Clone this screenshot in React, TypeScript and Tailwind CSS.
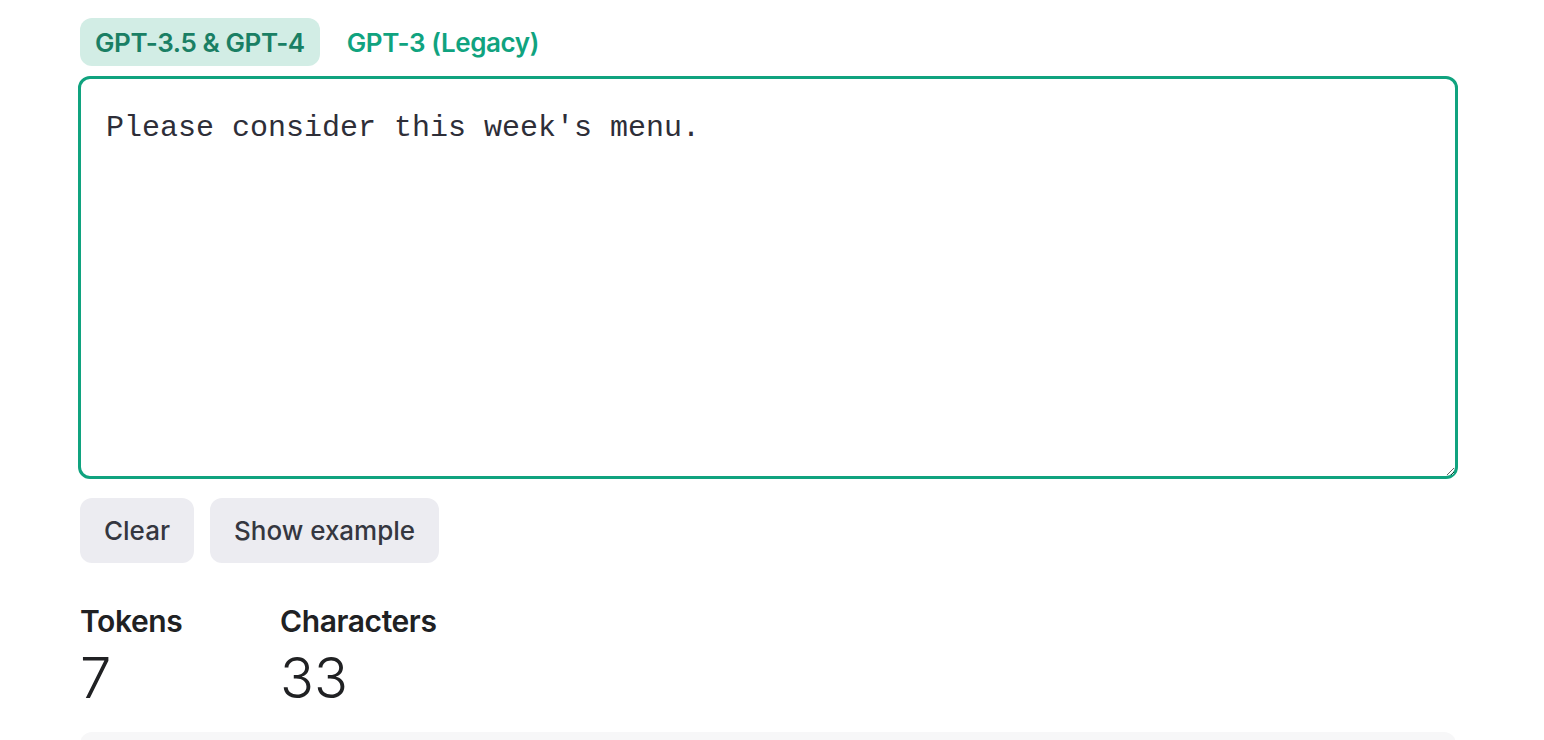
import React, { useEffect, useRef, useState } from 'react';

const App = () => {
  const [tab, setTab] = useState<'chat' | 'legacy'>('chat');
  const [text, setText] = useState("Please consider this week's menu.");
  const areaRef = useRef<HTMLTextAreaElement>(null);

  useEffect(() => {
    const el = areaRef.current;
    if (el) {
      el.focus();
      el.setSelectionRange(el.value.length, el.value.length);
    }
  }, []);

  // rough token count, good enough for the demo
  const tokens = text.trim() ? text.match(/'s|\w+|[^\w\s]/g)?.length ?? 0 : 0;

  return (
    <div className="min-h-screen bg-white font-['Inter',sans-serif] text-[#202123]">
      <div className="ml-20 mr-[88px] pt-[18px]">
        <div className="flex items-center gap-[12px] mb-[10px]">
          <button
            onClick={() => setTab('chat')}
            className={`h-12 px-[15px] rounded-[12px] text-[26px] font-semibold tracking-[-0.4px] ${
              tab === 'chat' ? 'bg-[#d2ede5] text-[#1a7f64]' : 'text-[#10a37f]'
            }`}
          >
            GPT-3.5 &amp; GPT-4
          </button>
          <button
            onClick={() => setTab('legacy')}
            className={`h-12 px-[15px] rounded-[12px] text-[26px] font-semibold tracking-[-0.4px] ${
              tab === 'legacy' ? 'bg-[#d2ede5] text-[#1a7f64]' : 'text-[#10a37f]'
            }`}
          >
            GPT-3 (Legacy)
          </button>
        </div>

        <textarea
          ref={areaRef}
          value={text}
          onChange={(e) => setText(e.target.value)}
          className="-mx-[2px] block w-[calc(100%+4px)] h-[403px] border-[3px] border-[#10a37f] rounded-[12px] px-[25px] pt-[29px] pb-[22px] font-['Liberation_Mono',monospace] text-[30px] leading-[40px] text-[#2e2e38] outline-none resize-y caret-[#202123]"
        />

        <div className="flex gap-4 mt-[19px]">
          <button
            onClick={() => setText('')}
            className="h-[65px] px-6 rounded-[12px] bg-[#ececf1] text-[26px] font-medium text-[#353740]"
          >
            Clear
          </button>
          <button
            onClick={() => setText("Please consider this week's menu.")}
            className="h-[65px] px-6 rounded-[12px] bg-[#ececf1] text-[26px] font-medium text-[#353740]"
          >
            Show example
          </button>
        </div>

        <div className="flex mt-[40px]">
          <div className="w-[200px]">
            <div className="text-[30px] font-semibold leading-[36px] tracking-[-0.4px]">Tokens</div>
            <div className="pt-[6px] text-[56px] font-light leading-[66px]">{tokens}</div>
          </div>
          <div>
            <div className="text-[30px] font-semibold leading-[36px] tracking-[-0.4px]">Characters</div>
            <div className="pt-[6px] text-[56px] font-light leading-[66px]">{text.length}</div>
          </div>
        </div>

        <div className="mt-[21px] h-40 rounded-[12px] bg-[#f7f7f8]" />
      </div>
    </div>
  );
};

export default App;
